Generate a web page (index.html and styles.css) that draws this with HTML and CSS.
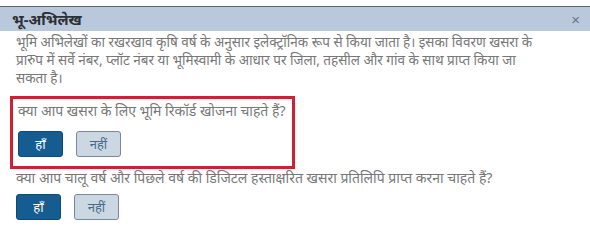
FILE: index.html
```html
<!DOCTYPE html>
<html lang="hi">
<head>
    <meta charset="UTF-8">
    <title>भू-अभिलेख</title>
    <link rel="stylesheet" href="styles.css">
</head>
<body>
    <div class="dialog">
        <div class="dialog-header">
            <span class="dialog-title">भू-अभिलेख</span>
            <button class="close-button" type="button">&#215;</button>
        </div>
        <div class="dialog-body">
            <p class="intro">भूमि अभिलेखों का रखरखाव कृषि वर्ष के अनुसार इलेक्ट्रॉनिक रूप से किया जाता है। इसका विवरण खसरा के प्रारुप में सर्वे नंबर, प्लॉट नंबर या भूमिस्वामी के आधार पर जिला, तहसील और गांव के साथ प्राप्त किया जा सकता है।</p>

            <div class="question highlight">
                <p>क्या आप खसरा के लिए भूमि रिकॉर्ड खोजना चाहते हैं?</p>
                <div class="actions">
                    <button class="btn btn-yes" type="button">हाँ</button>
                    <button class="btn btn-no" type="button">नहीं</button>
                </div>
            </div>

            <div class="question">
                <p>क्या आप चालू वर्ष और पिछले वर्ष की डिजिटल हस्ताक्षरित खसरा प्रतिलिपि प्राप्त करना चाहते हैं?</p>
                <div class="actions">
                    <button class="btn btn-yes" type="button">हाँ</button>
                    <button class="btn btn-no" type="button">नहीं</button>
                </div>
            </div>
        </div>
    </div>
</body>
</html>
```

FILE: styles.css
```css
body {
    margin: 0;
    padding: 0;
    background-color: #ffffff;
    font-family: "Noto Sans", "Liberation Sans", sans-serif;
}

.dialog {
    padding-top: 6px;
}

.dialog-header {
    display: flex;
    align-items: center;
    justify-content: space-between;
    height: 24px;
    padding: 0 10px 0 12px;
    background-color: #bac8db;
    border-top: 1px solid #5a6470;
}

.dialog-title {
    font-size: 15px;
    font-weight: bold;
    color: #2b2f36;
}

.close-button {
    background: none;
    border: none;
    padding: 0;
    font-size: 15px;
    color: #6b7480;
    cursor: pointer;
}

.dialog-body {
    padding: 2px 16px 0 16px;
}

.intro {
    max-width: 525px;
    margin: 0;
    font-size: 13.5px;
    line-height: 18px;
    color: #777777;
}

.question p {
    margin: 0;
    font-size: 14px;
    line-height: 18px;
    color: #777777;
}

.highlight {
    width: 274px;
    margin: 9px 0 0 -6px;
    padding: 3px 0 9px 5px;
    border: 3px solid #cc2233;
}

.actions {
    display: flex;
    gap: 13px;
    margin-top: 11px;
}

.question + .question .actions {
    margin-top: 7px;
}

.btn {
    width: 45px;
    height: 26px;
    border-radius: 3px;
    font-family: inherit;
    font-size: 13px;
    cursor: pointer;
}

.btn-yes {
    background-color: #155d91;
    color: #ffffff;
    border: 1px solid #0f4a75;
}

.btn-no {
    background-color: #cbd8e4;
    color: #4a6a8a;
    border: 1px solid #7d8896;
}
```
